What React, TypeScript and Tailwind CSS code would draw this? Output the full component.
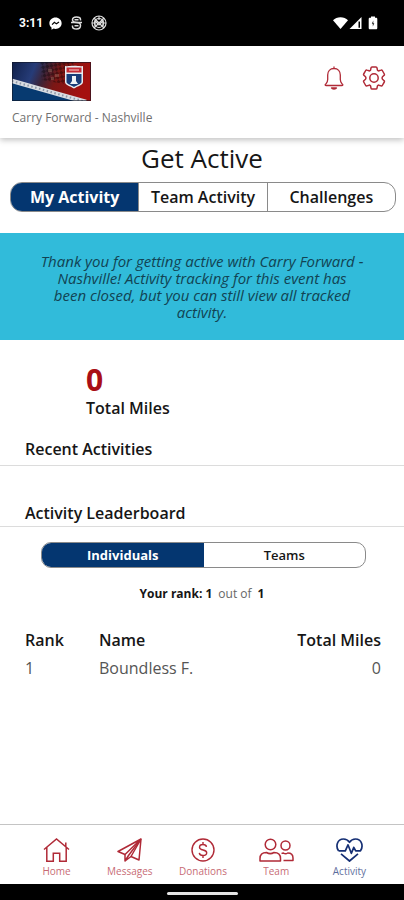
import { useState } from 'react';

const tabs = ['My Activity', 'Team Activity', 'Challenges'];
const boards = ['Individuals', 'Teams'];
const leaders = [{ rank: 1, name: 'Boundless F.', miles: 0 }];

function StatusBar() {
  return (
    <div className="flex h-[46px] items-center justify-between bg-black pl-[19px] pr-[26px] text-white">
      <div className="flex items-center gap-[6px]">
        <span className="font-['Roboto',sans-serif] text-xs leading-4 font-bold">3:11</span>
        <div className="flex items-center gap-[9px]">
          <svg className="h-[13px] w-[13px]" viewBox="0 0 14 14">
            <path
              d="M7 .5C3.200.5.4 3.200.4 6.700c0 2 .9 3.600 2.300 4.700v2.200L5 12.500c.6.2 1.300.3 2 .3 3.800 0 6.600-2.700 6.600-6.100C13.600 3.200 10.800.5 7 .5Z"
              fill="#fff"
            />
            <path d="m3.300 8.200 2.500-2.500 2.200 1.700 2.800-1.900" fill="none" stroke="#000" strokeWidth="1.300" />
          </svg>
          <svg className="h-[14px] w-[11px]" viewBox="0 0 11 14" fill="none" stroke="#ddd" strokeWidth="1.500">
            <path d="M9.500 4.500V3.500C9.500 2 8 1 5.500 1S1.500 2 1.500 3.800 3 6.500 5.500 6.500s4 1 4 3-1.500 3.500-4 3.500-4-1-4-2.500v-1" />
            <path d="M0 6.500h11M3.500 3.800h4M3.500 9.800h4" />
          </svg>
          <svg className="h-4 w-4" viewBox="0 0 16 16" fill="none" stroke="#ddd" strokeWidth="1.200">
            <circle cx="8" cy="8" r="7" />
            <circle cx="8" cy="8" r="4.500" />
            <path d="m3 3 10 10M13 3 3 13M8 1v4M4 12V6l4 4 4-4v6M1 8h3M12 8h3" />
          </svg>
        </div>
      </div>
      <div className="flex items-center">
        <svg className="h-[14px] w-[15px]" viewBox="0 0 15 14" fill="#fff">
          <path d="M0 4.200C2 2.300 4.500 1.300 7.500 1.300s5.500 1 7.500 2.900L7.500 13Z" />
        </svg>
        <svg className="ml-px h-[14px] w-[13px]" viewBox="0 0 13 14">
          <path d="M12.500 1v12H.5Z" fill="#fff" />
          <path d="M9.500 5.500h1.500v6.300H9.500Z" fill="#000" />
        </svg>
        <svg className="ml-[6px] h-[14px] w-[10px]" viewBox="0 0 10 14">
          <path
            d="M3 .5h4v1.200h1c.8 0 1.300.5 1.300 1.300v9c0 .8-.5 1.300-1.300 1.300H2c-.8 0-1.300-.5-1.300-1.300V3c0-.8.5-1.300 1.300-1.300h1Z"
            fill="#fff"
          />
          <path d="M5.300 4.500 3.800 7.800h1v2.700L6.300 7.200h-1Z" fill="#222" />
        </svg>
      </div>
    </div>
  );
}

function EventLogo() {
  return (
    <svg className="h-[39px] w-[79px]" viewBox="0 0 79 39" role="img" aria-label="Carry Forward Nashville">
      <defs>
        <linearGradient id="flag" x1="0" x2="1" y1="0" y2="0.200">
          <stop offset="0" stopColor="#10204a" />
          <stop offset="0.300" stopColor="#263c78" />
          <stop offset="0.450" stopColor="#3c2337" />
          <stop offset="0.620" stopColor="#7a1715" />
          <stop offset="1" stopColor="#a5100f" />
        </linearGradient>
        <pattern id="mesh" width="6" height="6" patternUnits="userSpaceOnUse" patternTransform="rotate(35)">
          <path d="M0 0h3v3H0ZM3 3h3v3H3Z" fill="#000" fillOpacity="0.350" />
        </pattern>
      </defs>
      <path d="M0 0h79v39H0Z" fill="url(#flag)" />
      <path d="M28 0h36L52 22 30 18Z" fill="url(#mesh)" />
      <path d="M36 7h4v3h-4ZM43 12h4v3h-4ZM39 15h3v3h-3Z" fill="#a4776a" fillOpacity="0.400" />
      <path d="M0 19 72 39H0Z" fill="#073a70" />
      <path d="m0 19 74 21" stroke="#d9dde2" strokeWidth="4.500" />
      <path d="m0 19 74 21" stroke="#8b96a5" strokeWidth="2" strokeDasharray="1.500 2.500" />
      <path d="M53 4c3 .6 5-.2 9-.2s6 .8 9 .2v16c0 3-5 4-9 6.500-4-2.500-9-3.500-9-6.500Z" fill="#e8edf2" />
      <path d="M54.500 5.500h15v5h-15Z" fill="#c42b35" />
      <path d="M57 8h10" stroke="#f0b5b8" strokeWidth="1.200" />
      <path d="M54.500 12h15v8c0 2-4.500 3-7.500 5-3-2-7.500-3-7.500-5Z" fill="#183d79" />
      <path d="M60 14h4v5l2 3h-8l2-3Z" fill="#edf3f7" />
      <path d="M.5.5h78v38H.5Z" fill="none" stroke="#101525" strokeOpacity="0.600" />
    </svg>
  );
}

function BellIcon() {
  return (
    <svg className="h-6 w-5" viewBox="0 0 20 24" fill="none" stroke="currentColor" strokeWidth="1.300" strokeLinejoin="round">
      <path d="M10 .5v2M10 2.500c-4 0-6.300 3-6.300 6.500v4.500c0 2-.7 3-1.700 4.300-1.500 1-.8 1.700.2 1.700h15.600c1 0 1.700-.7.2-1.700-1-1.300-1.700-2.300-1.700-4.300V9c0-3.500-2.300-6.500-6.300-6.500Z" />
      <path d="M7.500 22c.6 1.300 4.400 1.300 5 0Z" />
    </svg>
  );
}

function GearIcon() {
  return (
    <svg className="h-6 w-6" viewBox="0 0 24 24" fill="none" stroke="currentColor" strokeWidth="1.500" strokeLinejoin="round">
      <path d="M10 1h4c.6 0 .9.400 1 .9l.4 2c.1.700.900 1.200 1.600.9l2-.7c.5-.2 1 0 1.300.4l2 3.500c.3.500.2 1-.2 1.300l-1.600 1.500c-.5.600-.5 1.800 0 2.400l1.600 1.500c.4.300.5.800.2 1.300l-2 3.500c-.3.400-.8.600-1.300.4l-2-.7c-.7-.3-1.500.2-1.600.9l-.4 2c-.1.500-.4.900-1 .9h-4c-.6 0-.9-.4-1-.9l-.4-2c-.1-.7-.9-1.200-1.600-.9l-2 .7c-.5.200-1 0-1.300-.4l-2-3.500c-.3-.5-.2-1 .2-1.300l1.600-1.500c.5-.6.5-1.800 0-2.400L1.900 9.300c-.4-.3-.5-.8-.2-1.300l2-3.500c.3-.4.8-.6 1.300-.4l2 .7c.7.300 1.500-.2 1.600-.9l.4-2c.1-.5.4-.9 1-.9Z" />
      <circle cx="12" cy="12" r="4.200" />
    </svg>
  );
}

function HomeIcon() {
  return (
    <svg className="h-6 w-[27px]" viewBox="0 0 27 24" fill="none" stroke="currentColor" strokeWidth="1.500">
      <path d="M1 11.500 13.500 1 26 11.500M22.800 8.500V4.500M3.800 9.500v13.700h6.500v-8h6.400v8h6.500V9.500" />
    </svg>
  );
}

function PlaneIcon() {
  return (
    <svg className="h-6 w-[25px]" viewBox="0 0 25 24" fill="none" stroke="currentColor" strokeWidth="1.500" strokeLinejoin="round">
      <path d="M24 1 1 13.500l7 3L24 1l-2 21-8-3.500L24 1" />
      <path d="M8 16.500V23l3.500-5.500L24 1M8 23l6-4.500" />
    </svg>
  );
}

function DollarIcon() {
  return (
    <svg className="h-6 w-6" viewBox="0 0 24 24" fill="none" stroke="currentColor" strokeWidth="1.400">
      <circle cx="12" cy="12" r="11" />
      <path d="M15.500 8.800c-.3-1.500-1.600-2.300-3.500-2.300-2 0-3.500 1-3.500 2.700 0 3.900 7.200 1.700 7.200 5.600 0 1.700-1.600 2.700-3.700 2.700s-3.500-.9-3.700-2.600M12 4v2.500M12 17.500V20" />
    </svg>
  );
}

function TeamIcon() {
  return (
    <svg className="h-6 w-[35px]" viewBox="0 0 35 24" fill="none" stroke="currentColor" strokeWidth="1.500" strokeLinejoin="round">
      <circle cx="11.500" cy="6.500" r="5.300" />
      <path d="M7.500 14.500C3 14.500 1 17 1 20.500V23h20.500v-2.500c0-3.500-2-6-6.500-6-2 1.200-5.500 1.200-7.500 0Z" />
      <circle cx="26.500" cy="7.500" r="4.500" />
      <path d="M22.500 15.500c.6-.4 1.200-.5 2-.5 1.200.8 3 .8 4.200 0 3.500 0 5.300 1.800 5.300 5v2.500h-9.500" />
    </svg>
  );
}

function HeartIcon() {
  return (
    <svg className="h-6 w-[27px]" viewBox="0 0 27 24" fill="none" stroke="currentColor" strokeWidth="1.700" strokeLinejoin="round">
      <path d="M2.500 12.800C-.5 8.500 1 1 7.500 1c3 0 4.800 1.500 6 3.300C14.700 2.500 16.500 1 19.500 1 26 1 27.500 8.500 24.500 12.800h-4.800l-1.900-3.500-2.500 6-3.300-8.500-2.700 6H2.500M5 15.800l8.500 7.200 8.500-7.200" />
    </svg>
  );
}

const links = [
  { label: 'Home', icon: HomeIcon },
  { label: 'Messages', icon: PlaneIcon },
  { label: 'Donations', icon: DollarIcon },
  { label: 'Team', icon: TeamIcon },
  { label: 'Activity', icon: HeartIcon },
];

export default function App() {
  const [tab, setTab] = useState('My Activity');
  const [board, setBoard] = useState('Individuals');

  return (
    <div className="flex min-h-screen flex-col bg-white font-['Open_Sans',sans-serif] text-[#161616]">
      <StatusBar />

      <header className="flex h-[92px] items-start justify-between px-3 pt-4 shadow-[0_2px_6px_rgba(0,0,0,0.25)]">
        <div>
          <EventLogo />
          <p className="mt-[9px] text-xs leading-4 text-[#707070]">Carry Forward - Nashville</p>
        </div>
        <div className="flex gap-[18px] pt-1 pr-[6px] text-[#b02a37]">
          <button aria-label="Notifications">
            <BellIcon />
          </button>
          <button aria-label="Settings">
            <GearIcon />
          </button>
        </div>
      </header>

      <main className="flex-1">
        <h1 className="pt-1 text-center text-[26px] leading-8">Get Active</h1>

        <div className="mt-2 mr-2 ml-[10px] flex h-[30px] overflow-hidden rounded-xl border border-[#8a8a8a] bg-white">
          {tabs.map((name) => (
            <button
              key={name}
              onClick={() => setTab(name)}
              className={`flex-1 border-l border-[#8a8a8a] text-base leading-5 whitespace-nowrap first:border-l-0 ${
                tab === name ? 'bg-[#043670] font-bold text-white' : 'font-semibold'
              }`}
            >
              {name}
            </button>
          ))}
        </div>

        <div className="mt-[21px] flex min-h-[107px] items-center justify-center bg-[#31bbda] px-10">
          <p className="text-center text-[15px] leading-[17px] text-[#124353] italic">
            Thank you for getting active with Carry Forward - Nashville! Activity tracking for this event has been
            closed, but you can still view all tracked activity.
          </p>
        </div>

        <div className="pt-6 pl-[86px]">
          <p className="text-3xl leading-8 font-bold text-[#a90e16]">0</p>
          <p className="mt-[2px] text-base leading-5 font-semibold">Total Miles</p>
        </div>

        <h2 className="mt-[21px] border-b border-[#dcdcdc] px-[25px] pb-[6px] text-base leading-5 font-semibold">
          Recent Activities
        </h2>
        <h2 className="mt-[37px] border-b border-[#dcdcdc] px-[25px] pb-[3px] text-base leading-5 font-semibold">
          Activity Leaderboard
        </h2>

        <div className="mt-[15px] mr-[38px] ml-[41px] flex h-[26px] overflow-hidden rounded-[10px] border border-[#8a8a8a]">
          {boards.map((name) => (
            <button
              key={name}
              onClick={() => setBoard(name)}
              className={`flex-1 text-[13px] leading-4 ${
                board === name ? 'bg-[#043670] font-bold text-white' : 'font-semibold'
              }`}
            >
              {name}
            </button>
          ))}
        </div>

        <p className="mt-[18px] flex justify-center gap-[6px] text-xs leading-4">
          <b>Your rank: 1</b>
          <span className="text-[#666]">out of</span>
          <b>1</b>
        </p>

        <div className="mt-6 pr-[23px] pl-[25px]">
          <table className="w-full text-base leading-7">
            <thead>
              <tr>
                <th className="w-[74px] text-left font-semibold">Rank</th>
                <th className="text-left font-semibold">Name</th>
                <th className="text-right font-semibold">Total Miles</th>
              </tr>
            </thead>
            <tbody className="text-[#555]">
              {leaders.map((row) => (
                <tr key={row.rank}>
                  <td>{row.rank}</td>
                  <td>{row.name}</td>
                  <td className="text-right">{row.miles}</td>
                </tr>
              ))}
            </tbody>
          </table>
        </div>
      </main>

      <nav className="flex h-[60px] border-t border-[#c4c4c4] pt-[13px] pr-[18px] pl-5">
        {links.map(({ label, icon: Icon }) => (
          <a
            key={label}
            href={`#${label.toLowerCase()}`}
            className={`flex flex-1 flex-col items-center text-[10px] leading-4 ${
              label === 'Activity' ? 'text-[#152f74]' : 'text-[#b02a37]'
            }`}
          >
            <Icon />
            <span className="mt-px opacity-70">{label}</span>
          </a>
        ))}
      </nav>
      <div className="flex h-4 justify-center bg-black pt-2">
        <div className="h-[3px] w-[71px] rounded-full bg-[#e4e4e4]" />
      </div>
    </div>
  );
}
